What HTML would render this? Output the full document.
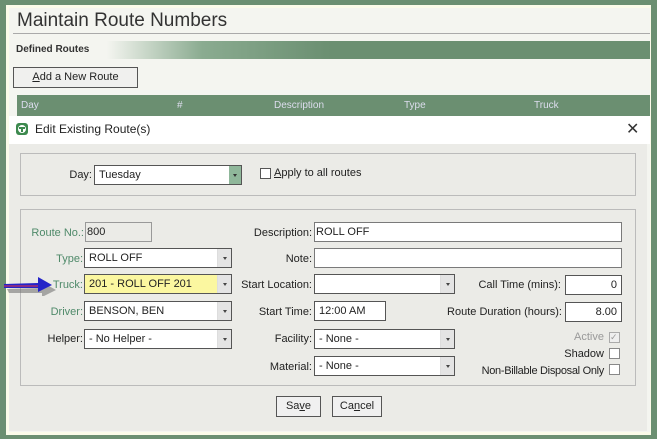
<!DOCTYPE html>
<html><head><style>
*{box-sizing:border-box;margin:0;padding:0}
body{width:657px;height:439px;background:#6b8f71;position:relative;overflow:hidden;font-family:"Liberation Sans",sans-serif;font-size:11px;color:#222}
.a{position:absolute}
.inp{position:absolute;background:#fff;border:1px solid #7a7a7a;height:20px;padding:2px 4px;font-size:11px;line-height:14px;white-space:nowrap;overflow:hidden}
.sel{position:absolute;background:#fff;border:1px solid #555;height:20px;padding:2px 4px;font-size:11px;line-height:14px}
.sel::after{content:"";position:absolute;right:0;top:0;width:13px;height:18px;background:#e4e4e4;border-left:1px solid #ddd}
.sel b{position:absolute;right:4px;top:8px;width:0;height:0;border-left:2.5px solid transparent;border-right:2.5px solid transparent;border-top:3px solid #444;z-index:2}
.lbl{position:absolute;text-align:right;font-size:11px;line-height:14px}
.g{color:#4f8a6a}
.cb{position:absolute;width:11px;height:11px;border:1px solid #888;background:#fff}
.btn{position:absolute;border:1px solid #555;background:#f0f0f0;height:21px;text-align:center;font-size:11px;line-height:19px}
</style></head><body>
<div class="a" style="left:6px;top:5px;width:645px;height:430px;background:#fbfbe9"></div>
<div class="a" style="left:9px;top:8px;width:641px;height:424px;background:#f4f5f0"></div>
<div class="a" style="left:17px;top:10px;font-size:19px;color:#333">Maintain Route Numbers</div>
<div class="a" style="left:13px;top:33px;width:637px;height:1px;background:#aaa"></div>
<div class="a" style="left:11px;top:41px;width:639px;height:18px;background:linear-gradient(90deg,#f4f5f0 0%,#f4f5f0 15%,#8aab90 30%,#6b8f71 50%)"></div>
<div class="a" style="left:16px;top:44px;font-weight:bold;font-size:10px;color:#333">Defined Routes</div>
<div class="btn" style="left:13px;top:67px;width:125px;background:#f0f0ee"><u>A</u>dd a New Route</div>
<div class="a" style="left:17px;top:95px;width:633px;height:21px;background:#6b8f71;color:#dde;font-size:10px;line-height:21px">
<span class="a" style="left:4px">Day</span><span class="a" style="left:160px">#</span><span class="a" style="left:257px">Description</span><span class="a" style="left:387px">Type</span><span class="a" style="left:517px">Truck</span></div>
<div class="a" style="left:9px;top:116px;width:641px;height:28px;background:#fff"></div>
<div class="a" style="left:16px;top:123px;width:12px;height:12px;border-radius:3px;background:#3d8a4f"><div class="a" style="left:2px;top:2px;width:8px;height:8px;border-radius:50%;background:#fff"></div><div class="a" style="left:5px;top:4px;width:2px;height:5px;background:#3d8a4f"></div><div class="a" style="left:3px;top:4px;width:6px;height:1.5px;background:#3d8a4f"></div></div>
<div class="a" style="left:35px;top:122px;font-size:12px;color:#222">Edit Existing Route(s)</div>
<div class="a" style="left:626px;top:119px;font-size:16px;color:#333">✕</div>
<div class="a" style="left:9px;top:144px;width:638px;height:287px;background:#ebebe7"></div>
<div class="a" style="left:20px;top:153px;width:616px;height:43px;border:1px solid #bbb"></div>
<div class="lbl" style="left:60px;top:168px;width:32px">Day:</div>
<div class="inp" style="left:94px;top:165px;width:148px;border-color:#555">Tuesday</div>
<div class="a" style="left:229px;top:166px;width:12px;height:18px;background:#8fb79a"><div class="a" style="left:3.5px;top:8px;border-left:2.5px solid transparent;border-right:2.5px solid transparent;border-top:3px solid #333"></div></div>
<div class="cb" style="left:260px;top:168px;border-color:#555"></div>
<div class="lbl" style="left:274px;top:166px"><u>A</u>pply to all routes</div>
<div class="a" style="left:20px;top:209px;width:616px;height:177px;border:1px solid #bbb"></div>

<div class="lbl g" style="left:20px;top:226px;width:64px">Route No.:</div>
<div class="inp" style="left:85px;top:222px;width:67px;background:#ebebe7;padding-left:1px;border-color:#999">800</div>
<div class="lbl g" style="left:20px;top:252px;width:63px">Type:</div>
<div class="sel" style="left:84px;top:248px;width:148px">ROLL OFF<b></b></div>
<div class="lbl g" style="left:20px;top:278px;width:63px">Truck:</div>
<div class="sel" style="left:84px;top:274px;width:148px;background:#fbf7a0">201 - ROLL OFF 201<b></b></div>
<div class="lbl g" style="left:20px;top:305px;width:63px">Driver:</div>
<div class="sel" style="left:84px;top:301px;width:148px">BENSON, BEN<b></b></div>
<div class="lbl" style="left:20px;top:332px;width:63px">Helper:</div>
<div class="sel" style="left:84px;top:329px;width:148px">- No Helper -<b></b></div>

<svg class="a" style="left:2px;top:276px" width="56" height="20"><polygon points="3,10 38,9 38,3 52,11 38,18 38,14 5,14" fill="#777" opacity=".6" transform="translate(2,3)"/><polygon points="2,8 36,7 36,1 50,9 36,16 36,12 2,12" fill="#2424c8"/><line x1="2" y1="10" x2="36" y2="10" stroke="#c03060" stroke-width="1.2"/></svg>

<div class="lbl" style="left:230px;top:226px;width:82px">Description:</div>
<div class="inp" style="left:314px;top:222px;width:308px;padding-left:1px">ROLL OFF</div>
<div class="lbl" style="left:230px;top:252px;width:82px">Note:</div>
<div class="inp" style="left:314px;top:248px;width:308px"></div>
<div class="lbl" style="left:230px;top:278px;width:82px">Start Location:</div>
<div class="sel" style="left:314px;top:274px;width:141px"><b></b></div>
<div class="lbl" style="left:230px;top:305px;width:82px">Start Time:</div>
<div class="inp" style="left:314px;top:301px;width:72px;border-color:#555">12:00 AM</div>
<div class="lbl" style="left:230px;top:332px;width:82px">Facility:</div>
<div class="sel" style="left:314px;top:329px;width:141px">- None -<b></b></div>
<div class="lbl" style="left:230px;top:360px;width:82px">Material:</div>
<div class="sel" style="left:314px;top:356px;width:141px">- None -<b></b></div>

<div class="lbl" style="left:440px;top:278px;width:121px">Call Time (mins):</div>
<div class="inp" style="left:565px;top:275px;width:57px;text-align:right;border-color:#555">0</div>
<div class="lbl" style="left:420px;top:305px;width:142px">Route Duration (hours):</div>
<div class="inp" style="left:565px;top:302px;width:57px;text-align:right;border-color:#555">8.00</div>
<div class="lbl" style="left:500px;top:330px;width:104px;color:#999">Active</div>
<div class="cb" style="left:609px;top:332px;background:#eee;border-color:#aaa;color:#999;font-size:9px;line-height:9px">✓</div>
<div class="lbl" style="left:500px;top:347px;width:104px">Shadow</div>
<div class="cb" style="left:609px;top:348px"></div>
<div class="lbl" style="left:460px;top:364px;width:144px;letter-spacing:-0.3px">Non-Billable Disposal Only</div>
<div class="cb" style="left:609px;top:364px"></div>

<div class="btn" style="left:276px;top:396px;width:45px">Sa<u>v</u>e</div>
<div class="btn" style="left:332px;top:396px;width:50px">Ca<u>n</u>cel</div>
</body></html>
